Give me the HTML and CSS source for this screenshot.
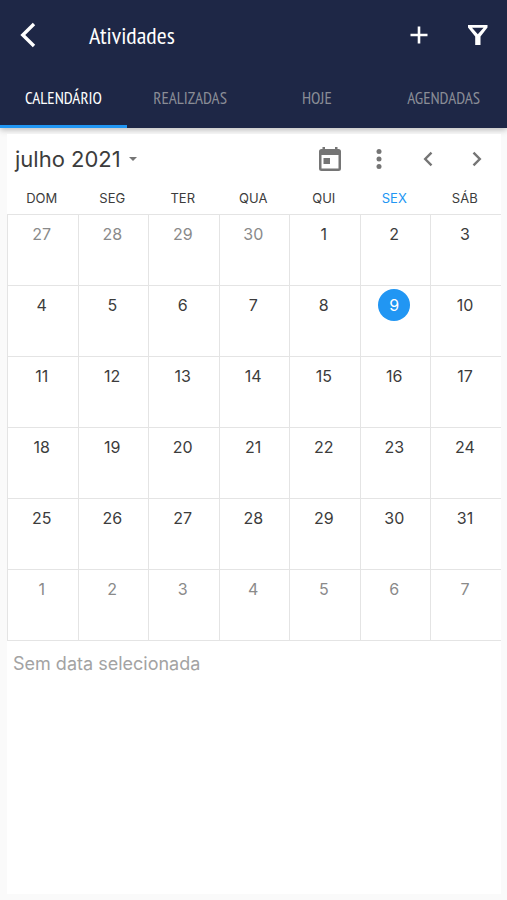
FILE: index.html
```html
<!DOCTYPE html>
<html lang="pt-BR">
<head>
  <meta charset="UTF-8">
  <meta name="viewport" content="width=device-width, initial-scale=1.0">
  <title>Atividades</title>
  <link rel="stylesheet" href="styles.css">
</head>
<body>
  <header class="header">
    <div class="barra">
      <button type="button" class="icone" aria-label="Voltar">
        <svg width="24" height="28" viewBox="0 0 24 28"><path d="M17 3 L5.800 14 L17 25" fill="none" stroke="#fff" stroke-width="3.400"/></svg>
      </button>
      <h1>Atividades</h1>
      <button type="button" class="icone" aria-label="Adicionar">
        <svg width="24" height="24" viewBox="0 0 24 24"><path d="M12 3.500V20.500M3.500 12H20.500" stroke="#fff" stroke-width="2.600"/></svg>
      </button>
      <button type="button" class="icone" aria-label="Filtrar">
        <svg width="24" height="24" viewBox="0 0 24 24"><path d="M2 2H21.500V4.500L14.500 13.500V22H9.200V13.500L2 4.500ZM6 4.700L11.800 11.300L17.600 4.700Z" fill="#fff" fill-rule="evenodd"/></svg>
      </button>
    </div>
    <nav class="abas">
      <a href="#" class="aba ativa">CALENDÁRIO</a>
      <a href="#" class="aba">REALIZADAS</a>
      <a href="#" class="aba">HOJE</a>
      <a href="#" class="aba">AGENDADAS</a>
    </nav>
  </header>

  <main class="painel">
    <div class="controles">
      <button type="button" class="mes">julho 2021
        <svg width="8" height="4" viewBox="0 0 8 4"><path d="M0 0H8L4 4Z" fill="#757575"/></svg>
      </button>
      <button type="button" class="icone" aria-label="Hoje">
        <svg width="24" height="26" viewBox="0 0 24 26"><path d="M4.500 1H7V3H17V1H19.500V3H20.500Q23 3 23 5.500V22.500Q23 25 20.500 25H3.500Q1 25 1 22.500V5.500Q1 3 3.500 3H4.500ZM3.500 9V22.500H20.500V9ZM5.500 12H12V18H5.500Z" fill="#757575" fill-rule="evenodd"/></svg>
      </button>
      <button type="button" class="icone" aria-label="Mais opções">
        <svg width="24" height="24" viewBox="0 0 24 24" fill="#757575"><circle cx="12" cy="4.500" r="2.500"/><circle cx="12" cy="12" r="2.500"/><circle cx="12" cy="19.500" r="2.500"/></svg>
      </button>
      <button type="button" class="icone" aria-label="Mês anterior">
        <svg width="24" height="24" viewBox="0 0 24 24"><path d="M15.500 5.700L9.200 12L15.500 18.300" fill="none" stroke="#757575" stroke-width="2.400"/></svg>
      </button>
      <button type="button" class="icone" aria-label="Próximo mês">
        <svg width="24" height="24" viewBox="0 0 24 24"><path d="M8.500 5.700L14.800 12L8.500 18.300" fill="none" stroke="#757575" stroke-width="2.400"/></svg>
      </button>
    </div>

    <table class="calendario">
      <thead>
        <tr><th>DOM</th><th>SEG</th><th>TER</th><th>QUA</th><th>QUI</th><th class="atual">SEX</th><th>SÁB</th></tr>
      </thead>
      <tbody>
        <tr><td class="fora">27</td><td class="fora">28</td><td class="fora">29</td><td class="fora">30</td><td>1</td><td>2</td><td>3</td></tr>
        <tr><td>4</td><td>5</td><td>6</td><td>7</td><td>8</td><td><span class="hoje">9</span></td><td>10</td></tr>
        <tr><td>11</td><td>12</td><td>13</td><td>14</td><td>15</td><td>16</td><td>17</td></tr>
        <tr><td>18</td><td>19</td><td>20</td><td>21</td><td>22</td><td>23</td><td>24</td></tr>
        <tr><td>25</td><td>26</td><td>27</td><td>28</td><td>29</td><td>30</td><td>31</td></tr>
        <tr><td class="fora">1</td><td class="fora">2</td><td class="fora">3</td><td class="fora">4</td><td class="fora">5</td><td class="fora">6</td><td class="fora">7</td></tr>
      </tbody>
    </table>

    <p class="aviso">Sem data selecionada</p>
  </main>
</body>
</html>
```
FILE: styles.css
```css
* {
  box-sizing: border-box;
}

body {
  margin: 0;
  min-height: 100vh;
  display: flex;
  flex-direction: column;
  background: #fafafa;
  font-family: Inter, Roboto, sans-serif;
  color: #3c3c3c;
}

button {
  padding: 0;
  border: none;
  background: none;
  font: inherit;
  color: inherit;
  cursor: pointer;
}

.icone {
  display: flex;
  justify-content: center;
  align-items: center;
  width: 24px;
}

/* Cabeçalho */
.header {
  background: #1e2746;
  color: #fff;
  font-family: "PT Sans Narrow", "Liberation Sans Narrow", "Open Sans", sans-serif;
  box-shadow: 0 2px 6px rgba(0, 0, 0, 0.25);
}

.barra {
  display: flex;
  align-items: center;
  gap: 35px;
  height: 70px;
  padding: 0 17px;
}

.barra h1 {
  flex: 1;
  margin: 0;
  padding-left: 13px;
  font-size: 24px;
  font-weight: normal;
}

.abas {
  display: flex;
  height: 58px;
}

.aba {
  flex: 1;
  border-bottom: 3px solid transparent;
  line-height: 56px;
  font-size: 17px;
  text-align: center;
  text-decoration: none;
  color: #8a8d96;
}

.ativa {
  border-color: #2196f3;
  color: #fff;
}

/* Calendário */
.painel {
  flex: 1;
  margin: 6px 6px 6px 7px;
  background: #fff;
}

.controles {
  display: flex;
  align-items: center;
  gap: 25px;
  height: 49px;
  padding: 0 12px 0 8px;
}

.mes {
  display: flex;
  align-items: center;
  gap: 8px;
  margin-right: auto;
  font-size: 22px;
}

.calendario {
  width: 100%;
  table-layout: fixed;
  border-collapse: collapse;
}

.calendario th {
  height: 31px;
  padding: 0 2px 1px 0;
  font-size: 13px;
  font-weight: normal;
}

.calendario .atual {
  color: #2196f3;
}

.calendario td {
  height: 71px;
  padding: 3px 2px 0 0;
  border: 1px solid #e4e4e4;
  border-right: none;
  vertical-align: top;
  text-align: center;
  font-size: 16px;
  line-height: 32px;
}

.calendario .fora {
  color: #8a8a8a;
}

.hoje {
  display: block;
  width: 32px;
  margin: 0 auto;
  border-radius: 50%;
  background: #2196f3;
  color: #fff;
}

.aviso {
  margin: 11px 6px;
  font-size: 18px;
  line-height: 24px;
  color: #a3a3a3;
}
```
